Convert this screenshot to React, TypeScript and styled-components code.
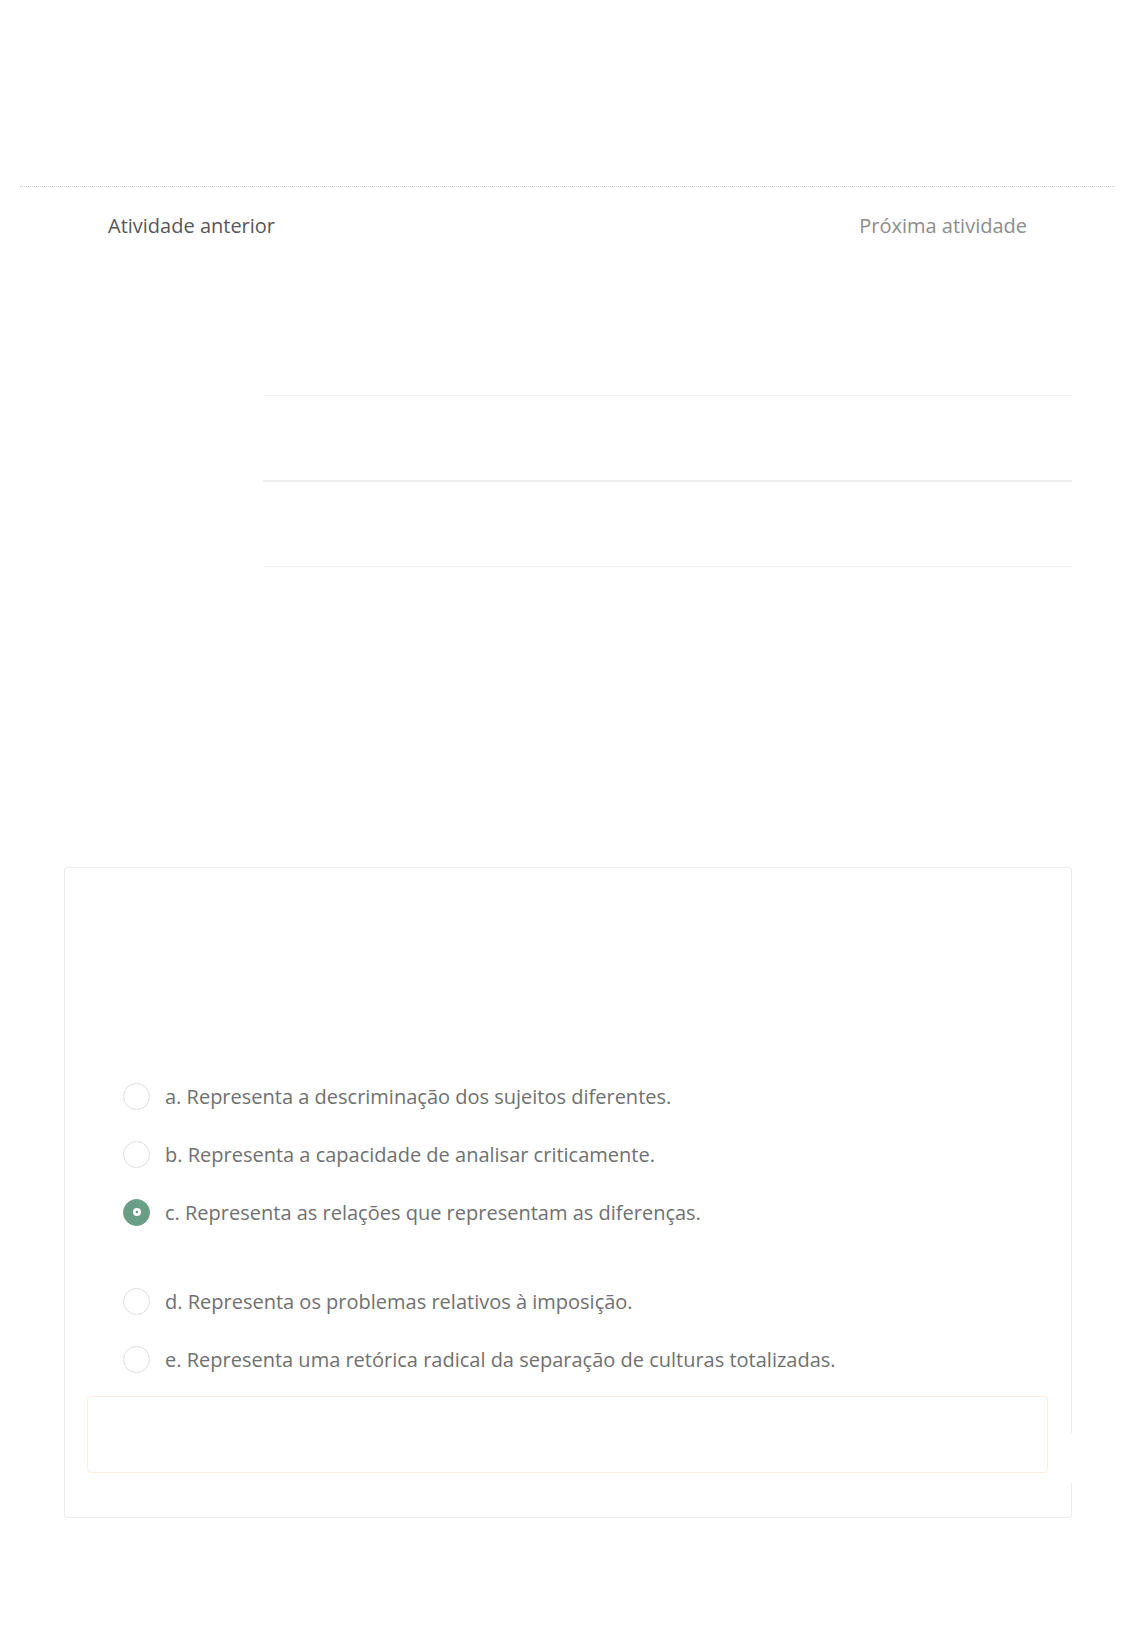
import React from "react";
import styled, { createGlobalStyle, css } from "styled-components";

const GlobalStyle = createGlobalStyle`
  html, body {
    margin: 0;
    padding: 0;
    background: #ffffff;
  }
  body {
    font-family: "Open Sans", "Liberation Sans", Arial, sans-serif;
  }
  * { box-sizing: border-box; }
`;

const Page = styled.div`
  width: 1136px;
  min-height: 1630px;
  padding-top: 186px;
  padding-bottom: 112px;
`;

const NavDivider = styled.hr`
  margin: 0 21px 0 20px;
  border: 0;
  border-top: 1px dotted #c9c9c9;
  height: 0;
`;

const NavRow = styled.nav`
  display: flex;
  justify-content: space-between;
  align-items: center;
  margin-top: 25px;
  padding: 0 109px 0 108px;
`;

const NavLink = styled.a<{ $muted?: boolean }>`
  font-size: 20px;
  line-height: 27px;
  color: ${(p) => (p.$muted ? "#8c8c8c" : "#575757")};
  text-decoration: none;
  cursor: pointer;
`;

const LinesBlock = styled.div`
  margin: 72px 0 0 263px;
  width: 809px;
`;

const LineRow = styled.div<{ $strong?: boolean }>`
  height: ${(p) => (p.$strong ? 86 : 85)}px;
  border-bottom: ${(p) => (p.$strong ? "2px solid #eef0ef" : "1px solid #f2f2f2")};
`;

const Card = styled.section`
  position: relative;
  margin: 300px 0 0 64px;
  width: 1008px;
  border: 1px solid #ececec;
  border-radius: 3px;
  padding-bottom: 44px;
`;

const QuestionArea = styled.div`
  height: 199px;
`;

const OptionList = styled.div`
  display: flex;
  flex-direction: column;
`;

const OptionRow = styled.label<{ $gapBefore?: boolean }>`
  display: flex;
  align-items: center;
  gap: 15px;
  height: 58px;
  padding-left: 58px;
  margin-top: ${(p) => (p.$gapBefore ? 31 : 0)}px;
  cursor: pointer;
`;

const Radio = styled.span<{ $checked?: boolean }>`
  position: relative;
  flex: 0 0 27px;
  width: 27px;
  height: 27px;
  border-radius: 50%;
  border: 1.5px solid #dedede;
  background: #ffffff;
  ${(p) =>
    p.$checked &&
    css`
      border-color: #6b9e87;
      background: #6b9e87;
      &::after {
        content: "";
        position: absolute;
        left: 50%;
        top: 50%;
        width: 8px;
        height: 8px;
        margin: -4px 0 0 -4px;
        border-radius: 50%;
        background: radial-gradient(circle, #6b9e87 0 1.4px, #ffffff 1.6px);
      }
    `}
`;

const OptionText = styled.span`
  font-size: 20px;
  line-height: 27px;
  color: #707070;
`;

const FeedbackBox = styled.div`
  margin: 8px 23px 0 22px;
  height: 77px;
  border: 1px solid #fdeee0;
  border-radius: 4px;
`;

const BorderMask = styled.span`
  position: absolute;
  right: -2px;
  top: 565px;
  width: 4px;
  height: 50px;
  background: #ffffff;
`;

const options = [
  { key: "a", text: "a. Representa a descriminação dos sujeitos diferentes." },
  { key: "b", text: "b. Representa a capacidade de analisar criticamente." },
  { key: "c", text: "c. Representa as relações que representam as diferenças.", checked: true },
  { key: "d", text: "d. Representa os problemas relativos à imposição.", gapBefore: true },
  { key: "e", text: "e. Representa uma retórica radical da separação de culturas totalizadas." },
];

export default function App() {
  return (
    <>
      <GlobalStyle />
      <Page>
        <NavDivider />
        <NavRow>
          <NavLink>Atividade anterior</NavLink>
          <NavLink $muted>Próxima atividade</NavLink>
        </NavRow>
        <LinesBlock>
          <LineRow />
          <LineRow $strong />
          <LineRow />
        </LinesBlock>
        <Card>
          <QuestionArea />
          <OptionList>
            {options.map((o) => (
              <OptionRow key={o.key} $gapBefore={o.gapBefore}>
                <Radio $checked={o.checked} />
                <OptionText>{o.text}</OptionText>
              </OptionRow>
            ))}
          </OptionList>
          <FeedbackBox />
          <BorderMask />
        </Card>
      </Page>
    </>
  );
}
